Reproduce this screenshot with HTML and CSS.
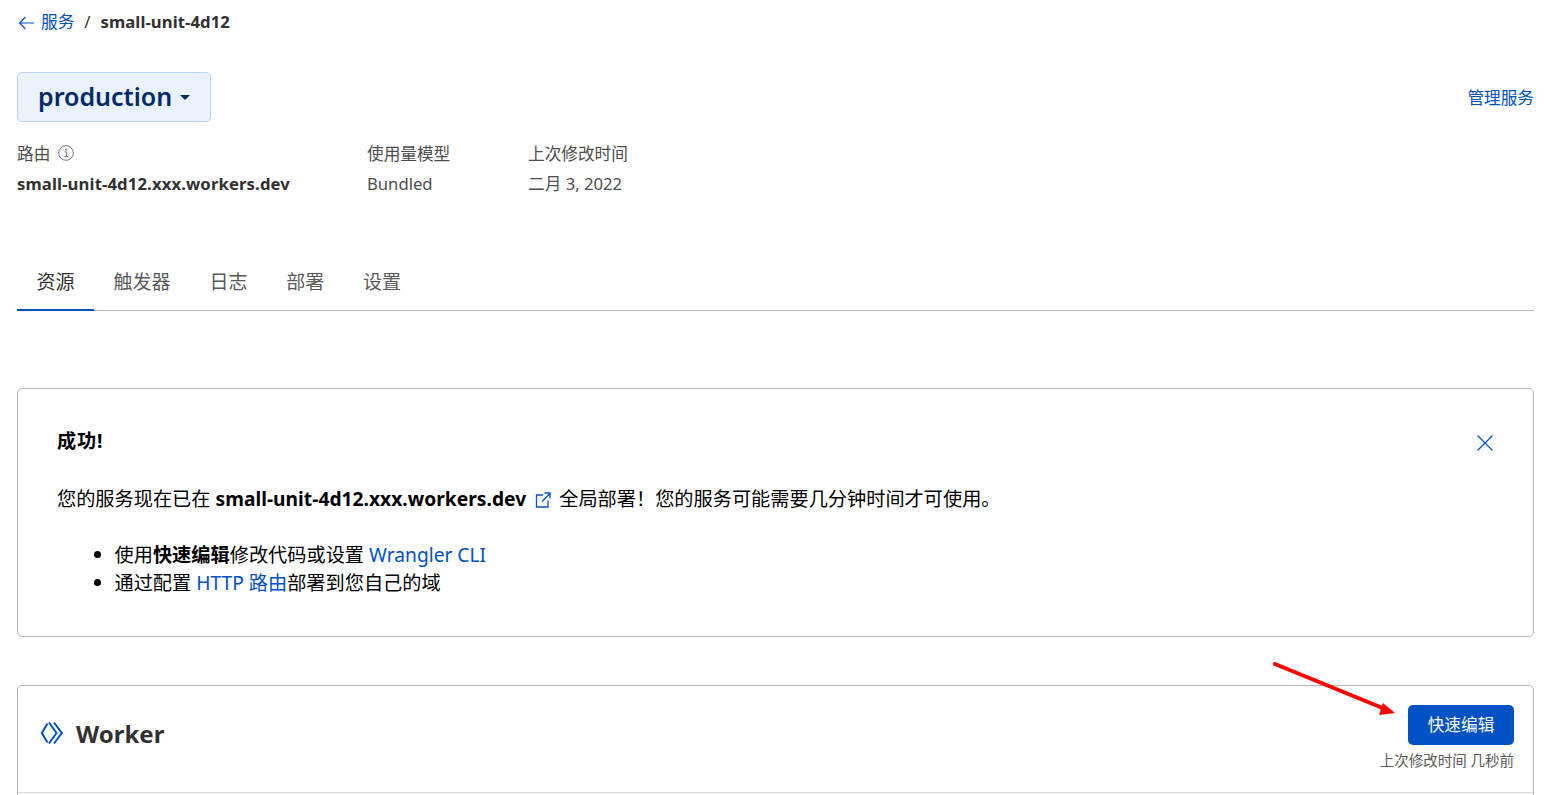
FILE: index.html
```html
<!DOCTYPE html>
<html lang="zh">
<head>
<meta charset="utf-8">
<title>small-unit-4d12</title>
<link rel="stylesheet" href="styles.css">
</head>
<body>
<main class="page">
  <nav class="crumbs">
    <svg class="back" width="16" height="14" viewBox="0 0 16 14"><path d="M7.500 1 1.500 7l6 6M1.500 7H16" fill="none" stroke="#0051c3" stroke-width="1.100"/></svg>
    <a class="link">服务</a><span class="sep">/</span><span class="cur">small-unit-4d12</span>
  </nav>
  <div class="head">
    <button class="env">production<span class="caret"></span></button>
    <a class="manage">管理服务</a>
  </div>
  <dl class="meta">
    <div class="m1"><dt>路由<svg class="info" width="16" height="16" viewBox="0 0 16 16"><circle cx="8" cy="8" r="7.300" fill="none" stroke="#777" stroke-width="1"/><path d="M6.600 6.800H8.400V11.600M6.400 11.600H10M7.600 4.200H8.600V5.200H7.600Z" fill="none" stroke="#777" stroke-width="1"/></svg></dt><dd class="strong">small-unit-4d12.xxx.workers.dev</dd></div>
    <div class="m2"><dt>使用量模型</dt><dd>Bundled</dd></div>
    <div class="m3"><dt>上次修改时间</dt><dd>二月 3, 2022</dd></div>
  </dl>
  <div class="tabs">
    <a class="tab active">资源</a><a class="tab">触发器</a><a class="tab">日志</a><a class="tab">部署</a><a class="tab">设置</a>
  </div>
  <section class="notice">
    <svg class="close" width="18" height="18" viewBox="0 0 18 18"><path d="M1.500 1.500 16.500 16.500M16.500 1.500 1.500 16.500" fill="none" stroke="#0051c3" stroke-width="1.200"/></svg>
    <h4>成功!</h4>
    <p>您的服务现在已在 <b>small-unit-4d12.xxx.workers.dev</b> <svg class="ext" width="16" height="16" viewBox="0 0 16 16"><path d="M8 3H1.500V15H13V8.500M7 9.500 15 1.500M9.500 1H15V6.500" fill="none" stroke="#0051c3" stroke-width="1.300"/></svg> 全局部署！您的服务可能需要几分钟时间才可使用。</p>
    <ul>
      <li>使用<b>快速编辑</b>修改代码或设置 <a class="link">Wrangler CLI</a></li>
      <li>通过配置 <a class="link">HTTP 路由</a>部署到您自己的域</li>
    </ul>
  </section>
  <section class="card">
    <div class="card-head">
      <h2><svg class="logo" width="24" height="24" viewBox="0 0 24 24"><path d="M7.500 2.500 1.800 12l5.700 9.500M9 1.500 16.500 12 9 22.500M14 1.500 21.800 12 14 22.500" fill="none" stroke="#0051c3" stroke-width="2"/></svg>Worker</h2>
      <div class="actions">
        <button class="primary">快速编辑</button>
        <small>上次修改时间 几秒前</small>
      </div>
    </div>
  </section>
</main>
<svg class="arrow" width="130" height="60" viewBox="0 0 130 60"><path d="M2 2 112 47" stroke="#f00" stroke-width="4" fill="none" stroke-linecap="round"/><path d="M122 51 110 41 106 53Z" fill="#f00"/></svg>
</body>
</html>
```
FILE: styles.css
```css
* { box-sizing: border-box; }
html, body { height: 795px; overflow: hidden; }
body {
  margin: 0;
  background: #fff;
  color: #313131;
  font-family: "Noto Sans", "Noto Sans CJK SC", sans-serif;
  font-size: 16.67px;
}
.page { padding: 0 20px 0 17px; }
a { text-decoration: none; cursor: pointer; }
.link { color: #0051c3; }
.crumbs { display: flex; align-items: center; height: 22px; margin-top: 11px; margin-bottom: 39px; line-height: 22px; }
.back { margin: 2px 7px 0 1px; }
.sep { margin: 0 10px; }
.cur { font-weight: 700; letter-spacing: .08px; }
.head { display: flex; justify-content: space-between; align-items: center; }
.env {
  display: flex; align-items: center;
  width: 194px; height: 50px; padding: 0 0 2px 20px;
  background: #e9f2fd; border: 1px solid #bcd7f7; border-radius: 5px;
  color: #002a6b; font: 600 25px "Noto Sans", sans-serif;
}
.caret { margin: 2px 0 0 8px; border: 5px solid transparent; border-top-color: #002a6b; border-bottom: 0; }
.manage { color: #0051c3; }
.meta { display: flex; margin: 19px 0 0; }
.meta div { display: block; }
.m1 { width: 350px; } .m2 { width: 161px; }
dt { display: flex; align-items: center; height: 24px; color: #4d4d4d; }
dd { margin: 7px 0 0; height: 24px; line-height: 24px; color: #4d4d4d; }
dd.strong { font-weight: 700; color: #313131; letter-spacing: .13px; }
.info { margin-left: 8px; }
.tabs { display: flex; margin-top: 62px; border-bottom: 1px solid #b5b5b5; height: 53px; }
.tab { width: 77px; height: 53px; padding-top: 11px; text-align: center; font-size: 19px; color: #595959; line-height: 26px; }
.tab:nth-child(2) { width: 96px; }
.tab:nth-child(4) { width: 76.500px; }
.tab.active { color: #313131; border-bottom: 2px solid #0051c3; }
.notice {
  position: relative;
  margin-top: 77px; height: 249px; padding: 38px 39px 0;
  border: 1px solid #b5b5b5; border-radius: 5px; color: #000;
  font-size: 19.200px; line-height: 28px;
}
.close { position: absolute; left: 1458px; top: 45px; }
h4 { margin: 0; font-size: 19.200px; font-weight: 700; line-height: 28px; letter-spacing: .8px; }
.notice p { margin: 30px 0 0; }
.notice b { letter-spacing: .03px; }
.ext { vertical-align: -2px; margin: 0 3px 0 4px; }
.notice ul { margin: 28px 0 0; padding-left: 57.500px; }
.card { margin-top: 48px; height: 200px; border: 1px solid #b5b5b5; border-radius: 5px 5px 0 0; }
.card-head { display: flex; justify-content: space-between; height: 107px; padding: 19px 19px 0 22px; border-bottom: 1px solid #d9d9d9; }
h2 { display: flex; align-items: center; height: 58px; margin: 0; font-size: 24px; font-weight: 700; padding-bottom: 2px; }
.logo { margin-right: 12px; }
.actions { display: flex; flex-direction: column; align-items: flex-end; }
.primary { width: 106px; height: 40px; padding: 0 0 2px; background: #0051c3; border: 0; border-radius: 5px; color: #fff; font: 16.67px "Noto Sans CJK SC", sans-serif; }
small { margin-top: 5px; font-size: 14.500px; line-height: 20px; color: #595959; }
.arrow { position: absolute; left: 1273px; top: 662px; }
```
